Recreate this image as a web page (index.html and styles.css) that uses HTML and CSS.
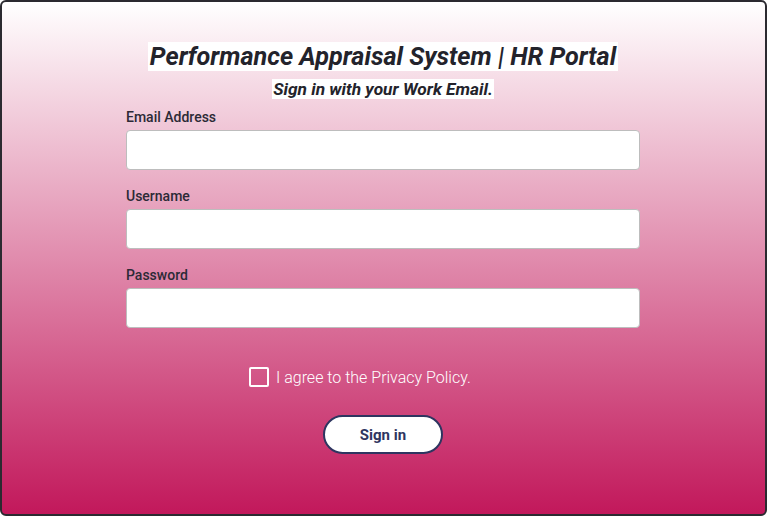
FILE: index.html
```html
<!DOCTYPE html>
<html lang="en">
<head>
    <meta charset="UTF-8">
    <meta name="viewport" content="width=device-width, initial-scale=1.0">
    <title>HR Portal - Sign in</title>
    <link rel="stylesheet" href="styles.css">
</head>
<body>

    <div class="page">
        <form class="login">
            <h1><span>Performance Appraisal System | HR Portal</span></h1>
            <h2><span>Sign in with your Work Email.</span></h2>

            <div class="field">
                <label for="email">Email Address</label>
                <input type="email" id="email">
            </div>
            <div class="field">
                <label for="username">Username</label>
                <input type="text" id="username">
            </div>
            <div class="field">
                <label for="password">Password</label>
                <input type="password" id="password">
            </div>

            <label class="agree">
                <span class="box"></span>
                I agree to the Privacy Policy.
            </label>

            <button type="button" class="signin">Sign in</button>
        </form>
    </div>

</body>
</html>
```

FILE: styles.css
```css
html, body {
    margin: 0;
    padding: 0;
    background: #fff;
}
body {
    font-family: Roboto, "Liberation Sans", Arial, sans-serif;
}
.page {
    width: 767px;
    height: 516px;
    box-sizing: border-box;
    border: 2px solid #2b2a30;
    border-radius: 6px;
    background: linear-gradient(to bottom, #ffffff 0%, #c2185b 100%);
    display: flex;
    padding-left: 124px;
}
.login {
    width: 514px;
    padding-top: 40px;
    display: flex;
    flex-direction: column;
}
h1 {
    margin: 0;
    text-align: center;
    font-size: 25.2px;
    font-weight: 700;
    font-style: italic;
    line-height: 29px;
    color: #23232b;
}
h1 span {
    background: #fff;
    padding: 0 2px;
}
h2 {
    margin: 8px 0 0;
    text-align: center;
    font-size: 17.3px;
    font-weight: 700;
    font-style: italic;
    line-height: 20px;
    color: #23232b;
}
h2 span {
    background: #fff;
    padding: 0 1px;
}
.field {
    display: flex;
    flex-direction: column;
    margin-bottom: 18px;
}
.login h2 + .field {
    margin-top: 10px;
}
.field label {
    font-size: 14px;
    font-weight: 500;
    color: #2c2a36;
    line-height: 17px;
    margin-bottom: 4px;
}
.field input {
    height: 40px;
    box-sizing: border-box;
    border: 1px solid #bdbdbd;
    border-radius: 4px;
    background: #fff;
    padding: 0 10px;
    font-size: 14px;
}
.agree {
    display: flex;
    align-items: center;
    gap: 7px;
    margin-top: 21px;
    padding-left: 123px;
    font-size: 16px;
    font-weight: 300;
    color: #fff;
}
.agree .box {
    width: 20px;
    height: 20px;
    box-sizing: border-box;
    border: 2px solid #fff;
    border-radius: 2px;
}
.signin {
    align-self: center;
    margin-top: 28px;
    width: 120px;
    height: 39px;
    border: 2px solid #2e3560;
    border-radius: 20px;
    background: #fff;
    color: #2e3560;
    font-family: Roboto, "Liberation Sans", Arial, sans-serif;
    font-size: 15px;
    font-weight: 700;
    cursor: pointer;
}
```
